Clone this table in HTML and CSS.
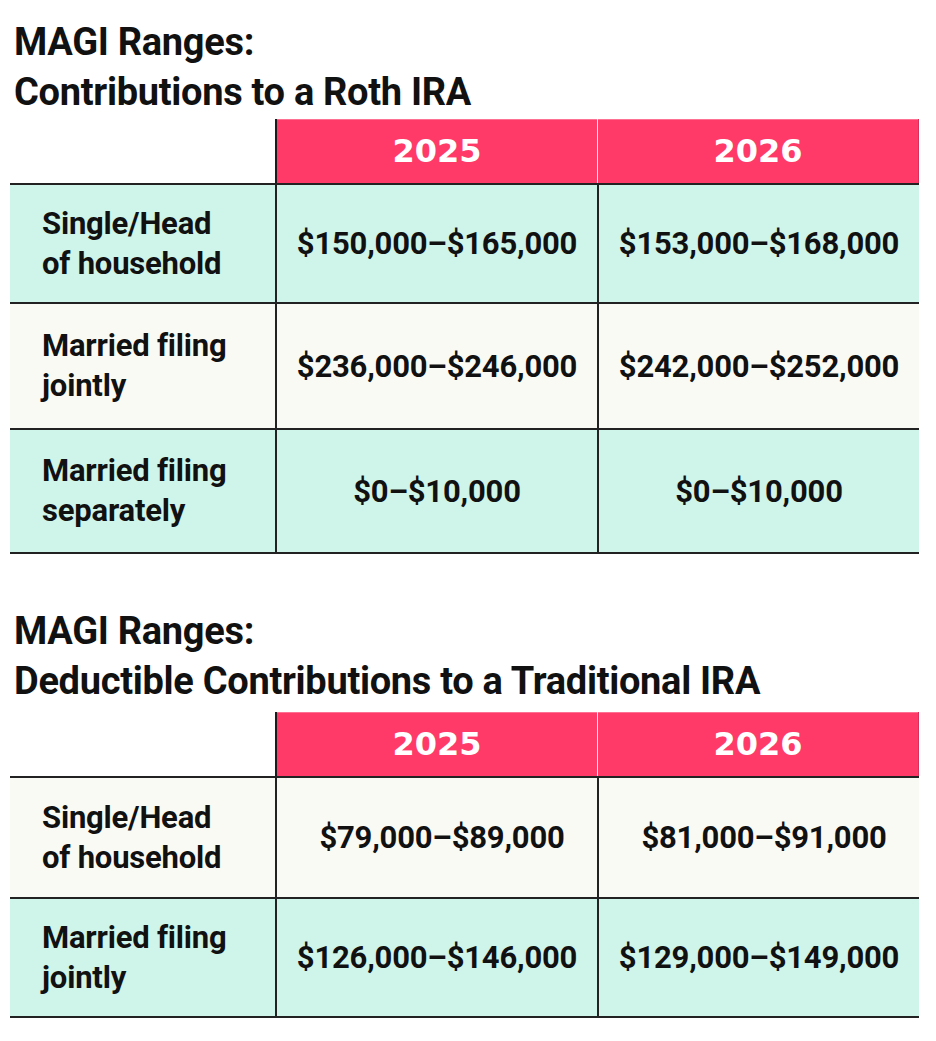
FILE: index.html
```html
<!DOCTYPE html>
<html lang="en">
<head>
<meta charset="utf-8">
<title>MAGI Ranges</title>
<link rel="stylesheet" href="styles.css">
</head>
<body>
<div class="page">
  <section class="chart chart-roth">
    <h2 class="title"><span>MAGI Ranges:</span><span>Contributions to a Roth IRA</span></h2>
    <div class="grid">
      <div class="corner"></div>
      <div class="year year-a">2025</div>
      <div class="year year-b">2026</div>

      <div class="label teal r1">Single/Head<br>of household</div>
      <div class="val teal r1">$150,000–$165,000</div>
      <div class="val teal r1">$153,000–$168,000</div>

      <div class="label ivory r2">Married filing<br>jointly</div>
      <div class="val ivory r2">$236,000–$246,000</div>
      <div class="val ivory r2">$242,000–$252,000</div>

      <div class="label teal r3 last">Married filing<br>separately</div>
      <div class="val teal r3 last">$0–$10,000</div>
      <div class="val teal r3 last">$0–$10,000</div>
    </div>
  </section>

  <section class="chart chart-trad">
    <h2 class="title"><span>MAGI Ranges:</span><span>Deductible Contributions to a Traditional IRA</span></h2>
    <div class="grid">
      <div class="corner"></div>
      <div class="year year-a">2025</div>
      <div class="year year-b">2026</div>

      <div class="label ivory s1">Single/Head<br>of household</div>
      <div class="val ivory s1 shift">$79,000–$89,000</div>
      <div class="val ivory s1 shift">$81,000–$91,000</div>

      <div class="label teal s2 last">Married filing<br>jointly</div>
      <div class="val teal s2 last">$126,000–$146,000</div>
      <div class="val teal s2 last">$129,000–$149,000</div>
    </div>
  </section>
</div>
</body>
</html>
```

FILE: styles.css
```css
html, body {
  margin: 0;
  padding: 0;
  background: #ffffff;
}

body {
  font-family: Roboto, "Liberation Sans", sans-serif;
  color: #111111;
}

.page {
  width: 936px;
  padding: 17px 0 0 10px;
  box-sizing: border-box;
}

.chart-trad {
  margin-top: 52px;
}

.chart-trad .grid {
  margin-top: 6px;
}

.title {
  margin: 0 0 0 4px;
  font-size: 38px;
  font-weight: 700;
  line-height: 50px;
  letter-spacing: -0.3px;
  display: flex;
  flex-direction: column;
}

.grid {
  display: grid;
  grid-template-columns: 265px 322px 322px;
  margin-top: 2px;
}

.corner {
  height: 64px;
  background: #ffffff;
}

.year {
  height: 64px;
  background: #ff3a68;
  color: #ffffff;
  font-family: "DejaVu Sans", Roboto, sans-serif;
  font-weight: 700;
  font-size: 32px;
  display: flex;
  align-items: center;
  justify-content: center;
  box-shadow: inset 0 1px 0 rgba(255, 150, 175, 0.6);
}

.year-a {
  border-left: 2px solid #1c1c1c;
}

.year-b {
  border-left: 1px solid #ffe3ea;
  border-right: 1px solid #d83058;
}

.label, .val {
  border-top: 2px solid #222222;
  font-weight: 700;
  display: flex;
  align-items: center;
}

.label {
  padding-left: 32px;
  font-size: 31px;
  line-height: 40px;
  letter-spacing: -0.2px;
}

.val {
  justify-content: center;
  font-size: 31px;
  letter-spacing: -0.2px;
  border-left: 2px solid #222222;
}

.val.shift {
  padding-left: 10px;
}

.last {
  border-bottom: 2px solid #222222;
}

.teal {
  background: #cff4ea;
}

.ivory {
  background: #fafaf5;
}

.r1 { height: 117px; }
.r2 { height: 124px; }
.r3 { height: 122px; }
.s1 { height: 119px; }
.s2 { height: 117px; }
```
